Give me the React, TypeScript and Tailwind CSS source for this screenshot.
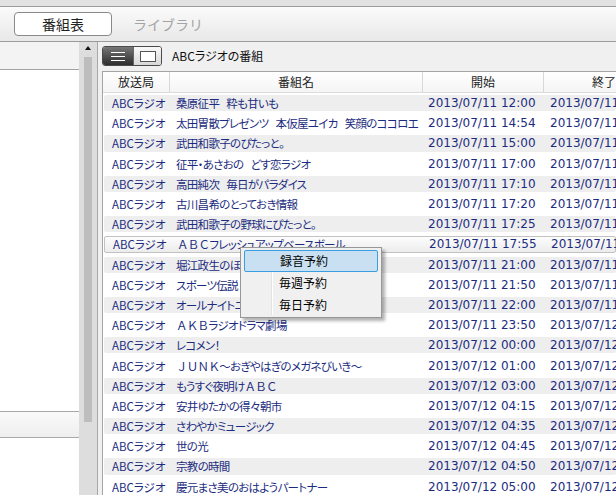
const rows: [string, string, string, string][] = [
  ["ABCラジオ", "桑原征平　粋も甘いも", "2013/07/11 12:00", "2013/07/11 14:54"],
  ["ABCラジオ", "太田胃散プレゼンツ　本仮屋ユイカ　笑顔のココロエ", "2013/07/11 14:54", "2013/07/11 15:00"],
  ["ABCラジオ", "武田和歌子のぴたっと。", "2013/07/11 15:00", "2013/07/11 17:00"],
  ["ABCラジオ", "征平・あさおの　どす恋ラジオ", "2013/07/11 17:00", "2013/07/11 17:10"],
  ["ABCラジオ", "高田純次　毎日がパラダイス", "2013/07/11 17:10", "2013/07/11 17:20"],
  ["ABCラジオ", "古川昌希のとっておき情報", "2013/07/11 17:20", "2013/07/11 17:25"],
  ["ABCラジオ", "武田和歌子の野球にぴたっと。", "2013/07/11 17:25", "2013/07/11 17:55"],
  ["ABCラジオ", "ＡＢＣフレッシュアップベースボール", "2013/07/11 17:55", "2013/07/11 21:00"],
  ["ABCラジオ", "堀江政生のほんまもん", "2013/07/11 21:00", "2013/07/11 21:50"],
  ["ABCラジオ", "スポーツ伝説", "2013/07/11 21:50", "2013/07/11 22:00"],
  ["ABCラジオ", "オールナイトニッポン", "2013/07/11 22:00", "2013/07/11 23:50"],
  ["ABCラジオ", "ＡＫＢラジオドラマ劇場", "2013/07/11 23:50", "2013/07/12 00:00"],
  ["ABCラジオ", "レコメン！", "2013/07/12 00:00", "2013/07/12 01:00"],
  ["ABCラジオ", "ＪＵＮＫ～おぎやはぎのメガネびいき～", "2013/07/12 01:00", "2013/07/12 03:00"],
  ["ABCラジオ", "もうすぐ夜明けＡＢＣ", "2013/07/12 03:00", "2013/07/12 04:15"],
  ["ABCラジオ", "安井ゆたかの得々朝市", "2013/07/12 04:15", "2013/07/12 04:35"],
  ["ABCラジオ", "さわやかミュージック", "2013/07/12 04:35", "2013/07/12 04:45"],
  ["ABCラジオ", "世の光", "2013/07/12 04:45", "2013/07/12 04:50"],
  ["ABCラジオ", "宗教の時間", "2013/07/12 04:50", "2013/07/12 05:00"],
  ["ABCラジオ", "慶元まさ美のおはようパートナー", "2013/07/12 05:00", "2013/07/12 05:30"],
];

// full-width latin letters keep their full width, kana get proportional spacing,
// ideographic spaces are a bit narrower like the original UI font
function Name({ text }: { text: string }) {
  const parts = text.split(/([Ａ-Ｚ０-９]+|　)/);
  return (
    <>
      {parts.map((p, i) => {
        if (p === "　") return <span key={i} className="inline-block w-[7px]" />;
        if (/^[Ａ-Ｚ０-９]+$/.test(p))
          return (
            <span key={i} className="[font-feature-settings:normal]">
              {p}
            </span>
          );
        return <span key={i}>{p}</span>;
      })}
    </>
  );
}

function Row({ r, i }: { r: [string, string, string, string]; i: number }) {
  const selected = i === 7;
  const band = selected
    ? "border border-[#c2c2c2] bg-gradient-to-b from-[#fdfdfd] to-[#ececec]"
    : i % 2 === 0
      ? "bg-[#eeeeee]"
      : "";
  return (
    <div className="h-[20.2px] py-[2px] pl-[1px] shrink-0">
      <div className={`h-full flex items-center rounded-[2px] whitespace-nowrap text-[#1b2c80] ${band}`}>
        <div className="w-[66px] shrink-0 pl-[8px] text-[11.5px]">{r[0]}</div>
        <div className="w-[253px] shrink-0 pl-[6px] overflow-hidden text-[11.5px] tracking-[-0.7px]">
          <Name text={r[1]} />
        </div>
        <div className="w-[121px] shrink-0 pl-[5px] font-['DejaVu_Sans',sans-serif]">{r[2]}</div>
        <div className="w-[121px] shrink-0 pl-[6px] font-['DejaVu_Sans',sans-serif]">{r[3]}</div>
      </div>
    </div>
  );
}

export default function App() {
  return (
    <div className="relative w-[616px] h-[495px] overflow-hidden flex flex-col bg-[#f0f0f0] font-['Noto_Sans_CJK_JP',sans-serif] text-[12px] leading-[16px] [font-feature-settings:'palt']">
      {/* top toolbar */}
      <div className="h-[7px] shrink-0 bg-[#e2e2e2] border-b border-[#9c9c9c]" />
      <div className="h-[35px] shrink-0 flex items-center gap-[21px] px-[14px] bg-gradient-to-b from-[#fbfbfb] to-[#e8e8e8] border-b border-[#9c9c9c]">
        <button className="w-[98px] h-[24px] rounded-[4px] border border-[#8a8a8a] bg-white text-[14px] text-[#222] [font-feature-settings:normal]">
          番組表
        </button>
        <span className="text-[14px] text-[#a3a3a3] [font-feature-settings:normal]">ライブラリ</span>
      </div>

      <div className="flex flex-1 min-h-0">
        {/* left panel */}
        <div className="w-[79px] shrink-0 flex flex-col bg-white">
          <div className="h-[28px] shrink-0 bg-[#f3f3f3] border-b border-[#a3a3a3]" />
          <div className="flex-1" />
          <div className="h-[27px] shrink-0 bg-gradient-to-b from-[#fafafa] to-[#eeeeee] border-y border-[#a8a8a8]" />
          <div className="h-[57px] shrink-0" />
        </div>

        {/* scrollbar */}
        <div className="w-[19px] shrink-0 flex flex-col items-center bg-[#dddddd] border-r border-[#a8a8a8]">
          <svg width="8" height="6" viewBox="0 0 8 6" className="mt-[3px]">
            <path d="M4 1 L7 5 L1 5 Z" fill="#111" />
          </svg>
          <div className="mt-[6px] w-[8px] h-[365px] bg-[#bdbdbd]" />
        </div>

        {/* right panel */}
        <div className="flex-1 min-w-0 flex flex-col pl-[4px]">
          <div className="h-[29px] shrink-0 flex items-start pt-[4px]">
            <div className="w-[60px] h-[20px] flex rounded-[3px] border border-[#4a4a4a] overflow-hidden">
              <div className="w-[30px] flex items-center justify-center bg-gradient-to-b from-[#777] to-[#2e2e2e]">
                <svg width="16" height="12" viewBox="0 0 16 12">
                  <path d="M1 2.5H15M1 6.5H15M1 10.5H15" stroke="#fff" strokeWidth="1.2" />
                </svg>
              </div>
              <div className="flex-1 flex items-center justify-center bg-gradient-to-b from-[#fafafa] to-[#d8d8d8] border-l border-[#666]">
                <div className="w-[16px] h-[11px] border border-[#555] bg-white" />
              </div>
            </div>
            <span className="ml-[10px] mt-[2px] text-[#111]">ABCラジオの番組</span>
          </div>

          <div className="flex-1 min-h-0 flex flex-col bg-white border-l border-t border-[#a5a5a5] overflow-hidden">
            <div className="h-[21px] shrink-0 flex whitespace-nowrap text-[#222] bg-gradient-to-b from-white to-[#f5f5f5] border-b border-[#dcdcdc]">
              <div className="w-[67px] shrink-0 flex items-center justify-center border-r border-[#d8d8d8]">放送局</div>
              <div className="w-[253px] shrink-0 flex items-center justify-center border-r border-[#d8d8d8]">番組名</div>
              <div className="w-[121px] shrink-0 flex items-center justify-center border-r border-[#d8d8d8]">開始</div>
              <div className="w-[121px] shrink-0 flex items-center justify-center border-r border-[#d8d8d8]">終了</div>
            </div>
            <div className="flex flex-col">
              {rows.map((r, i) => (
                <Row key={i} r={r} i={i} />
              ))}
            </div>
          </div>
        </div>
      </div>

      {/* context menu */}
      <div className="absolute left-[240px] top-[247px] w-[142px] h-[71px] px-[3px] py-[2px] bg-[#f0f0f0] border border-[#979797] shadow-[3px_3px_3px_rgba(0,0,0,0.3)]">
        <div className="absolute left-[30px] top-[2px] bottom-[2px] w-[2px] border-l border-[#e2e3e3] bg-white" />
        <div className="relative h-[22px] flex items-center pl-[35px] bg-[#c8e0f2] border border-[#3a9ee0] rounded-[2px] text-black">録音予約</div>
        <div className="relative h-[22px] flex items-center pl-[35px] text-black">毎週予約</div>
        <div className="relative h-[22px] flex items-center pl-[35px] text-black">毎日予約</div>
      </div>
    </div>
  );
}
